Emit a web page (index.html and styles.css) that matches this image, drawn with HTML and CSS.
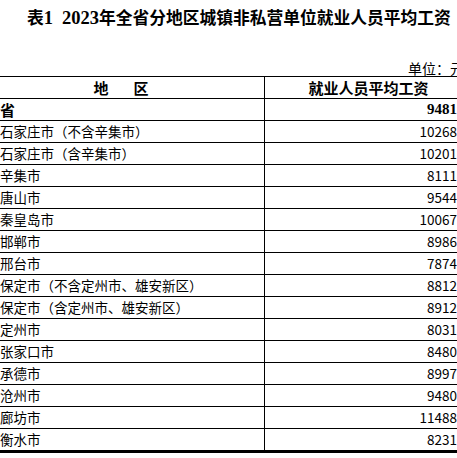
FILE: index.html
```html
<!DOCTYPE html>
<html lang="zh-CN">
<head>
<meta charset="utf-8">
<title>表1 2023年全省分地区城镇非私营单位就业人员平均工资</title>
<link rel="stylesheet" href="styles.css">
</head>
<body>
<div class="page">
  <h1 class="title">表<span class="num">1</span><span class="gap"></span><span class="num">2023</span>年全省分地区城镇非私营单位就业人员平均工资</h1>
  <div class="unit">单位：元</div>
  <div class="table">
    <div class="row head">
      <div class="c1 center"><span class="sp">地</span>区</div>
      <div class="c2 center">就业人员平均工资</div>
    </div>
    <div class="row strong">
      <div class="c1">省</div>
      <div class="c2 val num">9481</div>
    </div>
    <div class="row"><div class="c1">石家庄市（不含辛集市）</div><div class="c2 val">10268</div></div>
    <div class="row"><div class="c1">石家庄市（含辛集市）</div><div class="c2 val">10201</div></div>
    <div class="row"><div class="c1">辛集市</div><div class="c2 val">8111</div></div>
    <div class="row"><div class="c1">唐山市</div><div class="c2 val">9544</div></div>
    <div class="row"><div class="c1">秦皇岛市</div><div class="c2 val">10067</div></div>
    <div class="row"><div class="c1">邯郸市</div><div class="c2 val">8986</div></div>
    <div class="row"><div class="c1">邢台市</div><div class="c2 val">7874</div></div>
    <div class="row"><div class="c1">保定市（不含定州市、雄安新区）</div><div class="c2 val">8812</div></div>
    <div class="row"><div class="c1">保定市（含定州市、雄安新区）</div><div class="c2 val">8912</div></div>
    <div class="row"><div class="c1">定州市</div><div class="c2 val">8031</div></div>
    <div class="row"><div class="c1">张家口市</div><div class="c2 val">8480</div></div>
    <div class="row"><div class="c1">承德市</div><div class="c2 val">8997</div></div>
    <div class="row"><div class="c1">沧州市</div><div class="c2 val">9480</div></div>
    <div class="row"><div class="c1">廊坊市</div><div class="c2 val">11488</div></div>
    <div class="row last"><div class="c1">衡水市</div><div class="c2 val">8231</div></div>
  </div>
</div>
</body>
</html>
```

FILE: styles.css
```css
html, body {
  margin: 0;
  padding: 0;
  background: #fff;
  overflow: hidden;
}
body {
  width: 457px;
  height: 458px;
  font-family: "Noto Sans CJK SC", sans-serif;
  color: #000;
}
.page {
  width: 457px;
}
.title {
  margin: 6px 0 0 0;
  padding-left: 27px;
  font-size: 16.75px;
  line-height: 22px;
  font-weight: 700;
  white-space: nowrap;
}
.title .num {
  font-family: "Liberation Serif", serif;
  font-size: 18.5px;
  font-weight: 700;
}
.title .gap {
  display: inline-block;
  width: 9px;
}
.unit {
  margin-top: 32px;
  padding-left: 408px;
  font-size: 14px;
  line-height: 15px;
  white-space: nowrap;
}
.table {
  margin-left: -22px;
  width: 494px;
  border-top: 1px solid #000;
}
.row {
  display: grid;
  grid-template-columns: 287px 207px;
  height: 22px;
  box-sizing: border-box;
  border-bottom: 1px solid #000;
  font-size: 13.5px;
  line-height: 21px;
}
.row.last {
  height: 24px;
  border-bottom: 3px solid #000;
}
.c1 {
  box-sizing: border-box;
  border-right: 1px solid #000;
  padding-left: 22px;
  white-space: nowrap;
  display: flex;
  align-items: center;
}
.c2 {
  box-sizing: border-box;
  display: flex;
  align-items: center;
  white-space: nowrap;
}
.center {
  justify-content: center;
  padding-left: 0;
}
.head {
  font-size: 15px;
  font-weight: 700;
}
.head .c1 {
  padding-left: 0;
}
.sp {
  margin-right: 25px;
}
.strong .c1 {
  font-size: 15px;
  font-weight: 700;
}
.val {
  justify-content: flex-end;
  padding-right: 15px;
}
.val.num {
  font-family: "Liberation Serif", serif;
  font-size: 15px;
  font-weight: 700;
}
```
